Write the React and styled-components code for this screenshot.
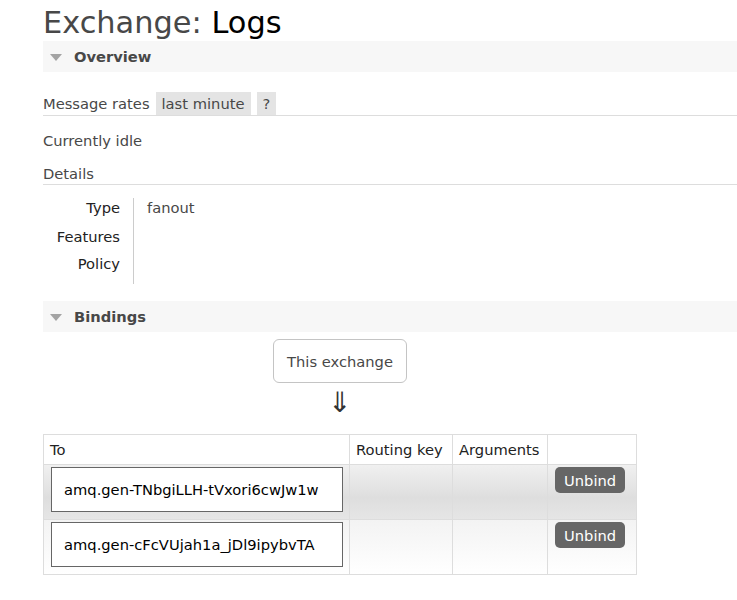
import React from 'react';
import styled, { createGlobalStyle } from 'styled-components';

const GlobalStyle = createGlobalStyle`
  html, body {
    margin: 0;
    padding: 0;
    background: #fff;
  }
  body {
    font-family: 'DejaVu Sans', Verdana, sans-serif;
    font-size: 14.7px;
    color: #484848;
  }
`;

const Page = styled.div`
  padding-left: 43px;
`;

const Title = styled.h1`
  margin: 5px 0 0;
  height: 36px;
  line-height: 36px;
  font-size: 30.4px;
  font-weight: normal;
  color: #484848;

  b {
    font-weight: normal;
    color: #000;
  }
`;

const SectionHeader = styled.div`
  display: flex;
  align-items: center;
  gap: 12px;
  height: 31px;
  padding-left: 7px;
  background: #f7f7f7;
  font-weight: bold;
  color: #484848;
`;

const Triangle = styled.span`
  width: 0;
  height: 0;
  border-left: 6px solid transparent;
  border-right: 6px solid transparent;
  border-top: 7px solid #a4a4a4;
  margin-top: 1px;
`;

const RatesRow = styled.div`
  display: flex;
  align-items: stretch;
  gap: 6px;
  margin-top: 20px;
  height: 23px;
  border-bottom: 1px solid #ddd;
  line-height: 23px;
`;

const Chip = styled.span`
  background: #e4e4e4;
  padding: 0 6px;
  color: #484848;
`;

const Line = styled.div`
  margin-top: 14px;
  line-height: 22px;
`;

const DetailsHead = styled.div`
  margin-top: 11px;
  line-height: 21px;
  border-bottom: 1px solid #ddd;
`;

const DetailsTable = styled.table`
  border-collapse: collapse;
  margin-top: 13px;

  th {
    width: 77px;
    padding: 0 13px 0 0;
    text-align: right;
    font-weight: normal;
    color: #222;
    vertical-align: top;
  }

  td {
    padding: 0 0 0 13px;
    border-left: 1px solid #ccc;
    vertical-align: top;
    width: 200px;
  }
`;

const DetailRow = styled.tr`
  th, td {
    height: ${({ h }) => h}px;
    line-height: 20px;
  }
`;

const Spacer = styled.div`
  height: ${({ h }) => h}px;
`;

const Flow = styled.div`
  display: flex;
  flex-direction: column;
  align-items: center;
  width: 594px;
`;

const ExchangeBox = styled.div`
  margin-top: 7px;
  width: 132px;
  height: 42px;
  border: 1px solid #c4c4c4;
  border-radius: 6px;
  display: flex;
  align-items: center;
  justify-content: center;
  color: #484848;
`;

const Arrow = styled.div`
  margin-top: 4px;
  height: 32px;
  font-size: 28px;
  line-height: 32px;
  color: #333;
`;

const BindTable = styled.table`
  margin-top: 15px;
  border-collapse: collapse;
  border: 1px solid #ddd;
  width: 593px;
  table-layout: fixed;

  th {
    height: 29px;
    padding: 0 6px;
    text-align: left;
    font-weight: normal;
    white-space: nowrap;
    color: #222;
    border: 1px solid #ddd;
    background: #fff;
  }

  td {
    height: 52px;
    border: 1px solid #ddd;
    vertical-align: top;
    padding: 2px 7px 0;
  }
`;

const Col = styled.col`
  width: ${({ w }) => w}px;
`;

const BindRow = styled.tr`
  background: ${({ alt }) =>
    alt
      ? 'linear-gradient(#f3f3f3, #ffffff)'
      : 'linear-gradient(#f0f0f0, #dedede 60%, #e6e6e6)'};
`;

const QueueBox = styled.div`
  width: 292px;
  height: 45px;
  border: 1px solid #666;
  background: #fff;
  display: flex;
  align-items: center;
  padding-left: 12px;
  box-sizing: border-box;
  color: #000;
  white-space: nowrap;
`;

const UnbindButton = styled.button`
  font-family: inherit;
  font-size: 14.7px;
  background: #666;
  color: #fff;
  border: none;
  border-radius: 5px;
  height: 26px;
  padding: 0 9px;
`;

const bindings = ['amq.gen-TNbgiLLH-tVxori6cwJw1w', 'amq.gen-cFcVUjah1a_jDl9ipybvTA'];

export default function App() {
  return (
    <>
      <GlobalStyle />
      <Page>
        <Title>
          Exchange: <b>Logs</b>
        </Title>
        <SectionHeader>
          <Triangle />
          Overview
        </SectionHeader>
        <RatesRow>
          <span>Message rates</span>
          <Chip>last minute</Chip>
          <Chip>?</Chip>
        </RatesRow>
        <Line>Currently idle</Line>
        <DetailsHead>Details</DetailsHead>
        <DetailsTable>
          <tbody>
            <DetailRow h={29}>
              <th>Type</th>
              <td>fanout</td>
            </DetailRow>
            <DetailRow h={27}>
              <th>Features</th>
              <td></td>
            </DetailRow>
            <DetailRow h={30}>
              <th>Policy</th>
              <td></td>
            </DetailRow>
          </tbody>
        </DetailsTable>
        <Spacer h={17} />
        <SectionHeader>
          <Triangle />
          Bindings
        </SectionHeader>
        <Flow>
          <ExchangeBox>This exchange</ExchangeBox>
          <Arrow>⇓</Arrow>
        </Flow>
        <BindTable>
          <colgroup>
            <Col w={306} />
            <Col w={103} />
            <Col w={95} />
            <Col w={89} />
          </colgroup>
          <thead>
            <tr>
              <th>To</th>
              <th>Routing key</th>
              <th>Arguments</th>
              <th></th>
            </tr>
          </thead>
          <tbody>
            {bindings.map((q, i) => (
              <BindRow key={q} alt={i % 2 === 1}>
                <td>
                  <QueueBox>{q}</QueueBox>
                </td>
                <td></td>
                <td></td>
                <td>
                  <UnbindButton>Unbind</UnbindButton>
                </td>
              </BindRow>
            ))}
          </tbody>
        </BindTable>
      </Page>
    </>
  );
}
